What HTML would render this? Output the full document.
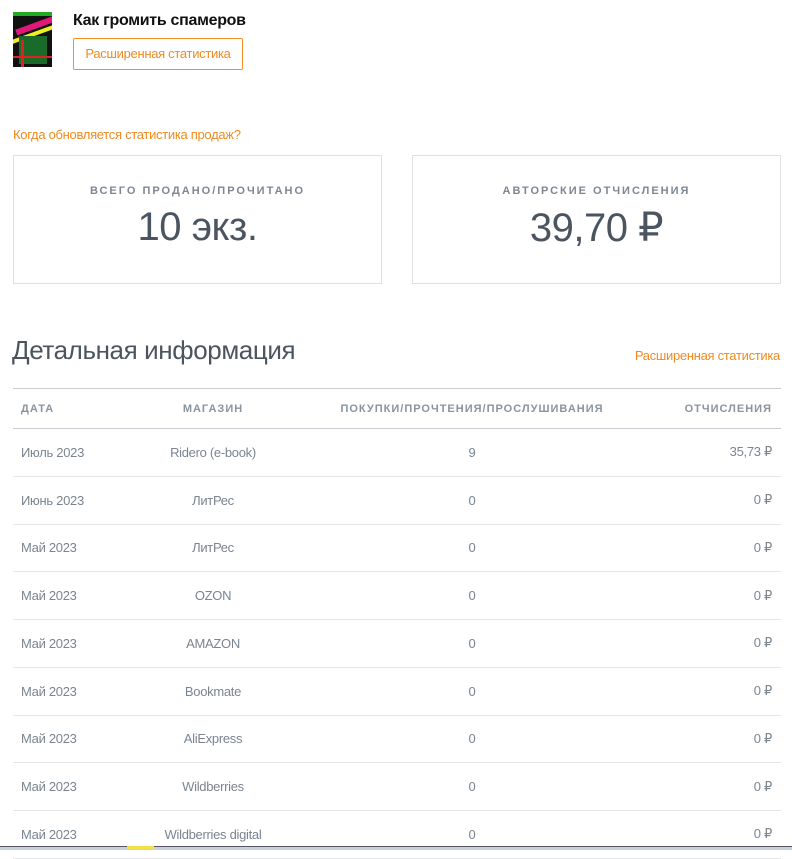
<!DOCTYPE html>
<html><head><meta charset="utf-8"><style>
body{margin:0;background:#fff;font-family:"Liberation Sans","DejaVu Sans",sans-serif;color:#6e7a85;width:792px;height:849px;overflow:hidden;position:relative}
.a{position:absolute}
.cover{left:13px;top:12px;width:39px;height:55px;background:#111;overflow:hidden}
.title{left:73px;top:12px;font-size:16px;font-weight:bold;color:#111;letter-spacing:-0.3px}
.btn{left:73px;top:38px;width:168px;height:30px;border:1px solid #f39128;border-radius:2px;color:#f08a1e;font-size:13px;line-height:30px;text-align:center;letter-spacing:-0.3px}
.lnk{color:#f08a1e;font-size:13px;letter-spacing:-0.3px}
.box{top:155px;height:127px;border:1px solid #dde1e4;text-align:center}
.box .l{margin-top:29px;font-size:11px;font-weight:bold;letter-spacing:2px;color:#7d8791}
.box .v{font-size:40px;color:#4b5560;margin-top:8px;letter-spacing:-0.5px}
h2{position:absolute;left:12px;top:335px;margin:0;font-weight:normal;font-size:26px;color:#4b5560;letter-spacing:-0.4px}
table{position:absolute;left:13px;top:388px;width:768px;border-collapse:collapse;font-size:13px;letter-spacing:-0.3px;table-layout:fixed}
th,td{padding:0}
th{height:39px;border-top:1px solid #c9cdd1;border-bottom:1px solid #c9cdd1;font-size:11px;font-weight:bold;letter-spacing:1px;color:#8a949d;white-space:nowrap}
td{height:46.75px;border-bottom:1px solid #e3e6e8;color:#7a858f}
.c1{text-align:left;padding-left:8px;width:112px}.c2{text-align:center;width:160px}.c3{text-align:center}.c4{text-align:right;padding-right:9px;width:121px}
</style></head><body>
<div class="a cover">
<div class="a" style="left:0;top:0;width:39px;height:4px;background:#2a2"></div>
<div class="a" style="left:2px;top:10px;width:44px;height:6px;background:#e0187a;transform:rotate(-20deg)"></div>
<div class="a" style="left:-2px;top:20px;width:46px;height:4px;background:#ee2;transform:rotate(-20deg)"></div>
<div class="a" style="left:6px;top:24px;width:28px;height:28px;background:#1a6a2a"></div>
<div class="a" style="left:8px;top:28px;width:3px;height:27px;background:#d22"></div>
<div class="a" style="left:0;top:44px;width:39px;height:2px;background:#d22"></div>
</div>
<div class="a title">Как громить спамеров</div>
<div class="a btn">Расширенная статистика</div>
<div class="a lnk" style="left:13px;top:127px">Когда обновляется статистика продаж?</div>
<div class="a box" style="left:13px;width:367px"><div class="l">ВСЕГО ПРОДАНО/ПРОЧИТАНО</div><div class="v">10 экз.</div></div>
<div class="a box" style="left:412px;width:367px"><div class="l">АВТОРСКИЕ ОТЧИСЛЕНИЯ</div><div class="v">39,70 ₽</div></div>
<h2>Детальная информация</h2>
<div class="a lnk" style="right:12px;top:348px">Расширенная статистика</div>
<table>
<tr><th class="c1">ДАТА</th><th class="c2">МАГАЗИН</th><th class="c3">ПОКУПКИ/ПРОЧТЕНИЯ/ПРОСЛУШИВАНИЯ</th><th class="c4">ОТЧИСЛЕНИЯ</th></tr>
<tr><td class="c1">Июль 2023</td><td class="c2">Ridero (e-book)</td><td class="c3">9</td><td class="c4">35,73 ₽</td></tr>
<tr><td class="c1">Июнь 2023</td><td class="c2">ЛитРес</td><td class="c3">0</td><td class="c4">0 ₽</td></tr>
<tr><td class="c1">Май 2023</td><td class="c2">ЛитРес</td><td class="c3">0</td><td class="c4">0 ₽</td></tr>
<tr><td class="c1">Май 2023</td><td class="c2">OZON</td><td class="c3">0</td><td class="c4">0 ₽</td></tr>
<tr><td class="c1">Май 2023</td><td class="c2">AMAZON</td><td class="c3">0</td><td class="c4">0 ₽</td></tr>
<tr><td class="c1">Май 2023</td><td class="c2">Bookmate</td><td class="c3">0</td><td class="c4">0 ₽</td></tr>
<tr><td class="c1">Май 2023</td><td class="c2">AliExpress</td><td class="c3">0</td><td class="c4">0 ₽</td></tr>
<tr><td class="c1">Май 2023</td><td class="c2">Wildberries</td><td class="c3">0</td><td class="c4">0 ₽</td></tr>
<tr><td class="c1">Май 2023</td><td class="c2">Wildberries digital</td><td class="c3">0</td><td class="c4">0 ₽</td></tr>
</table>
<div class="a" style="left:0;top:846px;width:792px;height:3px;background:#c8d0d8;border-top:1px solid #556"></div>
<div class="a" style="left:127px;top:846px;width:27px;height:3px;background:#f4e04a"></div>
</body></html>
